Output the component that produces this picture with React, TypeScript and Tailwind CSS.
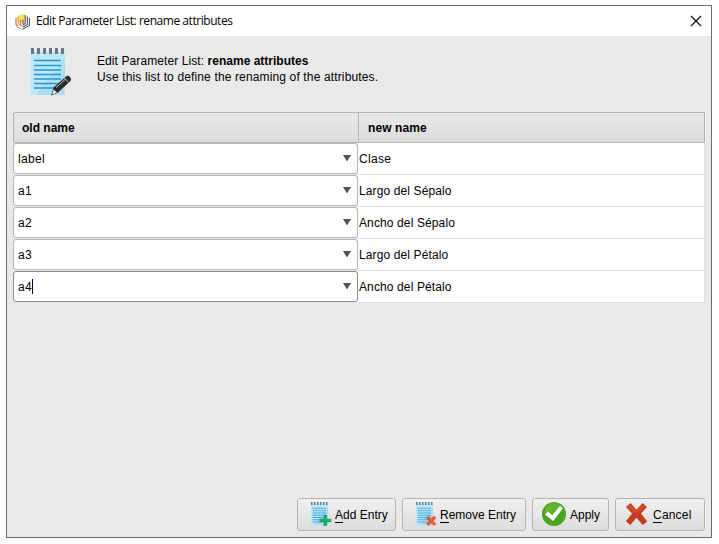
import React from "react";

const rows = [
  { oldName: "label", newName: "Clase" },
  { oldName: "a1", newName: "Largo del Sépalo" },
  { oldName: "a2", newName: "Ancho del Sépalo" },
  { oldName: "a3", newName: "Largo del Pétalo" },
  { oldName: "a4", newName: "Ancho del Pétalo", active: true },
];

function Logo() {
  return (
    <svg width="16" height="17" viewBox="0 0 16 17" fill="none">
      <path d="M2 4 7 1l4 1v5l-3 3-4-1z" fill="#f9dc55" />
      <path d="M1 5v6.500l2 1.200" stroke="#dc6a35" strokeWidth="1.200" />
      <path d="M3.200 4v6.500l2 1.200" stroke="#eda23a" strokeWidth="1.200" />
      <path d="M5.500 7v5.500l2 1" stroke="#e27a3c" strokeWidth="1.200" />
      <path d="M8 6.500v5M10.200 2v8.500L8 12M12.400 3.500v8L8 14M14.500 5v7.500L8 16" stroke="#5a5a66" strokeWidth="1.100" />
      <path d="m1 13.500 7 3.200" stroke="#d39a8a" strokeWidth="1" />
    </svg>
  );
}

function Pad() {
  return (
    <>
      <path d="M2 4h34v43H1z" fill="#d3f0fb" />
      <path d="M36 4v10L8 47H1L2 4z" fill="#b4e3f8" opacity=".7" />
      <path d="M36 10v37H7z" fill="#a3daf4" opacity=".8" />
      <path d="M5 12.500h27M5 17.500h27M5 22h27M5 26.500h27M5 31h27M5 35.500h27M5 40h20" stroke="#2496d3" strokeWidth="1.500" />
      <path d="M3.500 0v6M9.500 0v6M15.500 0v6M21.500 0v6M27.500 0v6M33.500 0v6" stroke="#657985" strokeWidth="3" />
    </>
  );
}

function NotebookPencil() {
  return (
    <svg width="43" height="49" viewBox="0 0 43 49">
      <Pad />
      <path d="m22 47.500 2.500-8L37 28.500q2-1.500 4 .5t.5 4L29 44.500z" fill="#2b2b2e" />
      <path d="m23 46.500 1.500-5 3.500 3z" fill="#e9eef0" />
      <path d="m27 39.500 9-8M35 29.500l4.500 5" stroke="#b9c1c5" strokeWidth="1" />
    </svg>
  );
}

function NotebookBadge({ kind }: { kind: "add" | "remove" }) {
  return (
    <svg width="22" height="25" viewBox="0 0 22 25">
      <g transform="scale(.5)"><Pad /></g>
      {kind === "add" ? (
        <path d="M13.500 13h3.500v3.700h4.300v3.600H17V24h-3.500v-3.700H9.500v-3.600h4z" fill="#25a865" />
      ) : (
        <path d="m11 16 2.500-2.200 2.700 2.700 2.800-2.700 2.300 2.300-2.800 2.800 2.800 2.800-2.300 2.300-2.800-2.700-2.700 2.700-2.500-2.300 2.800-2.800z" fill="#e25a3c" />
      )}
    </svg>
  );
}

function CheckIcon() {
  return (
    <svg width="25" height="25" viewBox="0 0 25 25">
      <circle cx="12" cy="12" r="12" fill="#49a51d" />
      <path d="M2.500 12A9.500 9.500 0 0 1 20 5.500Q14 16 2.500 12" fill="#62b52f" />
      <path d="m3 12.500 3-3 4.300 3.800L18 4l3 2.300-9.800 12.700z" fill="#fff" />
    </svg>
  );
}

function CrossIcon() {
  return (
    <svg width="23" height="24" viewBox="0 0 23 24">
      <path d="m5.500 1 6 6.700L17.500 1 22 5l-6 6.500 6.200 8-4.500 3.500-6.300-7.200L5.300 23 1 19.300l6-7.700L1 5z" fill="#c53d1c" />
      <path d="m5.500 2 6 7 6-7 3 3-6 5.500H8.500L2 5z" fill="#d04c28" />
    </svg>
  );
}

function Button({ icon, label, mnemonic, className }: { icon: React.ReactNode; label: string; mnemonic?: boolean; className: string }) {
  return (
    <button className={`flex h-[33px] shrink-0 items-start rounded-[3px] border border-[#b5b5b5] bg-linear-to-b from-[#f0f0f0] to-[#dddddd] ${className}`}>
      {icon}
      <span className="mt-[8px] whitespace-nowrap leading-4">
        {mnemonic ? <span className="inline-block border-b border-black leading-[13px]">{label[0]}</span> : label[0]}
        {label.slice(1)}
      </span>
    </button>
  );
}

export default function App() {
  return (
    <div className="h-[544px] w-[719px] overflow-hidden bg-[#fdfdfd] pl-[6px] pt-[5px] font-['Liberation_Sans',Arial,sans-serif] text-xs text-black">
      <div className="flex h-[533px] w-[706px] flex-col border border-[#6b6b6d] bg-[#e9e9e9]">
        <header className="flex h-[30px] shrink-0 items-center bg-white pl-[8px] pr-[9px]">
          <Logo />
          <h1 className="ml-[5px] whitespace-nowrap font-['Open_Sans','Noto_Sans',sans-serif] text-[12px] leading-4 tracking-[-0.45px]">Edit Parameter List: rename attributes</h1>
          <svg className="ml-auto" width="12" height="12" viewBox="0 0 12 12">
            <path d="m1 1 10 10M11 1 1 11" stroke="#111" strokeWidth="1.2" />
          </svg>
        </header>

        <section className="flex h-[76px] shrink-0 pl-[22px] pt-[12px]">
          <NotebookPencil />
          <div className="ml-[25px] mt-[5px] whitespace-nowrap leading-4">
            <p className="tracking-[0.09px]">Edit Parameter List: <b className="tracking-normal">rename attributes</b></p>
            <p className="tracking-[0.14px]">Use this list to define the renaming of the attributes.</p>
          </div>
        </section>

        <main className="ml-[6px] w-[692px]">
          <div className="flex h-[31px] rounded-tl-[2px] border border-[#b5b5b5] bg-linear-to-b from-[#e9e9e9] to-[#dcdcdc] font-bold leading-[30px]">
            <div className="w-[345px] border-r border-[#b5b5b5] pl-[8px]">old name</div>
            <div className="pl-[9px] tracking-[0.1px]">new name</div>
          </div>
          {rows.map((row) => (
            <div key={row.oldName} className="flex h-8">
              <div className={`flex h-[31px] w-[345px] items-center rounded-[3px] border bg-white pl-[4px] pr-[6px] ${row.active ? "border-[#8c8c8c]" : "border-[#b5b5b5]"}`}>
                <span className="tracking-[0.3px]">{row.oldName}</span>
                {row.active && <span className="h-[15px] w-px bg-[#00003c]" />}
                <svg className="ml-auto" width="8" height="7" viewBox="0 0 8 7"><path d="M0 0h8L4 6.500z" fill="#505050" /></svg>
              </div>
              <div className="flex flex-1 items-center border-b border-r border-[#dfdfdf] bg-white pl-px tracking-[0.12px]">
                <span className={row.newName === "Clase" ? "tracking-[0.3px]" : ""}>{row.newName}</span>
              </div>
            </div>
          ))}
        </main>

        <footer className="mb-[6px] mr-[6px] mt-auto flex justify-end">
          <Button icon={<span className="mr-[3px] mt-[3px]"><NotebookBadge kind="add" /></span>} label="Add Entry" mnemonic className="w-[99px] pl-[12px]" />
          <Button icon={<span className="mr-[3px] mt-[3px]"><NotebookBadge kind="remove" /></span>} label="Remove Entry" mnemonic className="ml-[6px] w-[124px] pl-[12px]" />
          <Button icon={<span className="mr-[3px] mt-[3px]"><CheckIcon /></span>} label="Apply" className="ml-[6px] w-[77px] pl-[9px]" />
          <Button icon={<span className="mr-[5px] mt-[3px]"><CrossIcon /></span>} label="Cancel" mnemonic className="ml-[6px] w-[90px] pl-[9px] tracking-[0.2px]" />
        </footer>
      </div>
    </div>
  );
}
